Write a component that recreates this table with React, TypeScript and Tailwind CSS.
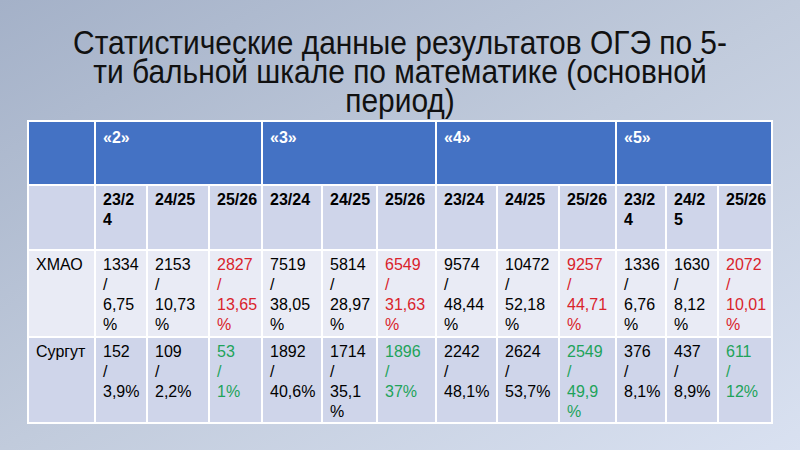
type Cell = { lines: string[]; tone?: "red" | "green" };

const widths = [67, 52, 62, 53, 60, 55, 59, 61, 62, 57, 50, 52, 54];

const years: string[][] = [
  ["23/2", "4"], ["24/25"], ["25/26"],
  ["23/24"], ["24/25"], ["25/26"],
  ["23/24"], ["24/25"], ["25/26"],
  ["23/2", "4"], ["24/2", "5"], ["25/26"],
];

const hmao: Cell[] = [
  { lines: ["1334", "/", "6,75", "%"] },
  { lines: ["2153", "/", "10,73", "%"] },
  { lines: ["2827", "/", "13,65", "%"], tone: "red" },
  { lines: ["7519", "/", "38,05", "%"] },
  { lines: ["5814", "/", "28,97", "%"] },
  { lines: ["6549", "/", "31,63", "%"], tone: "red" },
  { lines: ["9574", "/", "48,44", "%"] },
  { lines: ["10472", "/", "52,18", "%"] },
  { lines: ["9257", "/", "44,71", "%"], tone: "red" },
  { lines: ["1336", "/", "6,76", "%"] },
  { lines: ["1630", "/", "8,12", "%"] },
  { lines: ["2072", "/", "10,01", "%"], tone: "red" },
];

const surgut: Cell[] = [
  { lines: ["152", "/", "3,9%"] },
  { lines: ["109", "/", "2,2%"] },
  { lines: ["53", "/", "1%"], tone: "green" },
  { lines: ["1892", "/", "40,6%"] },
  { lines: ["1714", "/", "35,1", "%"] },
  { lines: ["1896", "/", "37%"], tone: "green" },
  { lines: ["2242", "/", "48,1%"] },
  { lines: ["2624", "/", "53,7%"] },
  { lines: ["2549", "/", "49,9", "%"], tone: "green" },
  { lines: ["376", "/", "8,1%"] },
  { lines: ["437", "/", "8,9%"] },
  { lines: ["611", "/", "12%"], tone: "green" },
];

const td = "border-2 border-white align-top px-[7px] pt-[4px]";

function Lines({ lines }: { lines: string[] }) {
  return (
    <>
      {lines.map((l, i) => (
        <div key={i} className="whitespace-nowrap">
          {l}
        </div>
      ))}
    </>
  );
}

function DataRow({ label, cells, bg, h }: { label: string; cells: Cell[]; bg: string; h: string }) {
  return (
    <tr className={`${bg} ${h}`}>
      <td className={td}>{label}</td>
      {cells.map((c, i) => (
        <td
          key={i}
          className={`${td} ${c.tone === "red" ? "text-[#d9232b]" : c.tone === "green" ? "text-[#1ea35a]" : "text-black"}`}
        >
          <Lines lines={c.lines} />
        </td>
      ))}
    </tr>
  );
}

export default function App() {
  return (
    <div className="w-[800px] h-[450px] overflow-hidden bg-gradient-to-br from-[#a4b1c8] via-[#c1cbdc] to-[#d9e1f1] font-['Liberation_Sans',Arial,sans-serif]">
      {/* title is a condensed face in the slide; squeeze the regular one */}
      <div className="h-[120px] pt-[28px]">
        <h1 className="scale-x-[0.88] text-center text-[34px] leading-[29px] text-[#111]">
          Статистические данные результатов ОГЭ по 5-
          <br />
          ти бальной шкале по математике (основной
          <br />
          период)
        </h1>
      </div>

      <div className="pl-[27px]">
        <table className="table-fixed border-collapse border-2 border-white text-[16px] leading-[20px] text-black w-[746px]">
          <colgroup>
            {widths.map((w, i) => (
              <col key={i} style={{ width: w }} />
            ))}
          </colgroup>
          <tbody>
            <tr className="bg-[#4472c4] h-[64px] text-white font-bold">
              <td className={td}></td>
              {["«2»", "«3»", "«4»", "«5»"].map((g) => (
                <td key={g} colSpan={3} className="border-2 border-white align-top px-[7px] pt-[6px]">
                  {g}
                </td>
              ))}
            </tr>
            <tr className="bg-[#cfd5ea] h-[65px] font-bold">
              <td className={td}></td>
              {years.map((y, i) => (
                <td key={i} className={td}>
                  <Lines lines={y} />
                </td>
              ))}
            </tr>
            <DataRow label="ХМАО" cells={hmao} bg="bg-[#e9ebf5]" h="h-[87px]" />
            <DataRow label="Сургут" cells={surgut} bg="bg-[#cfd5ea]" h="h-[86px]" />
          </tbody>
        </table>
      </div>
    </div>
  );
}
